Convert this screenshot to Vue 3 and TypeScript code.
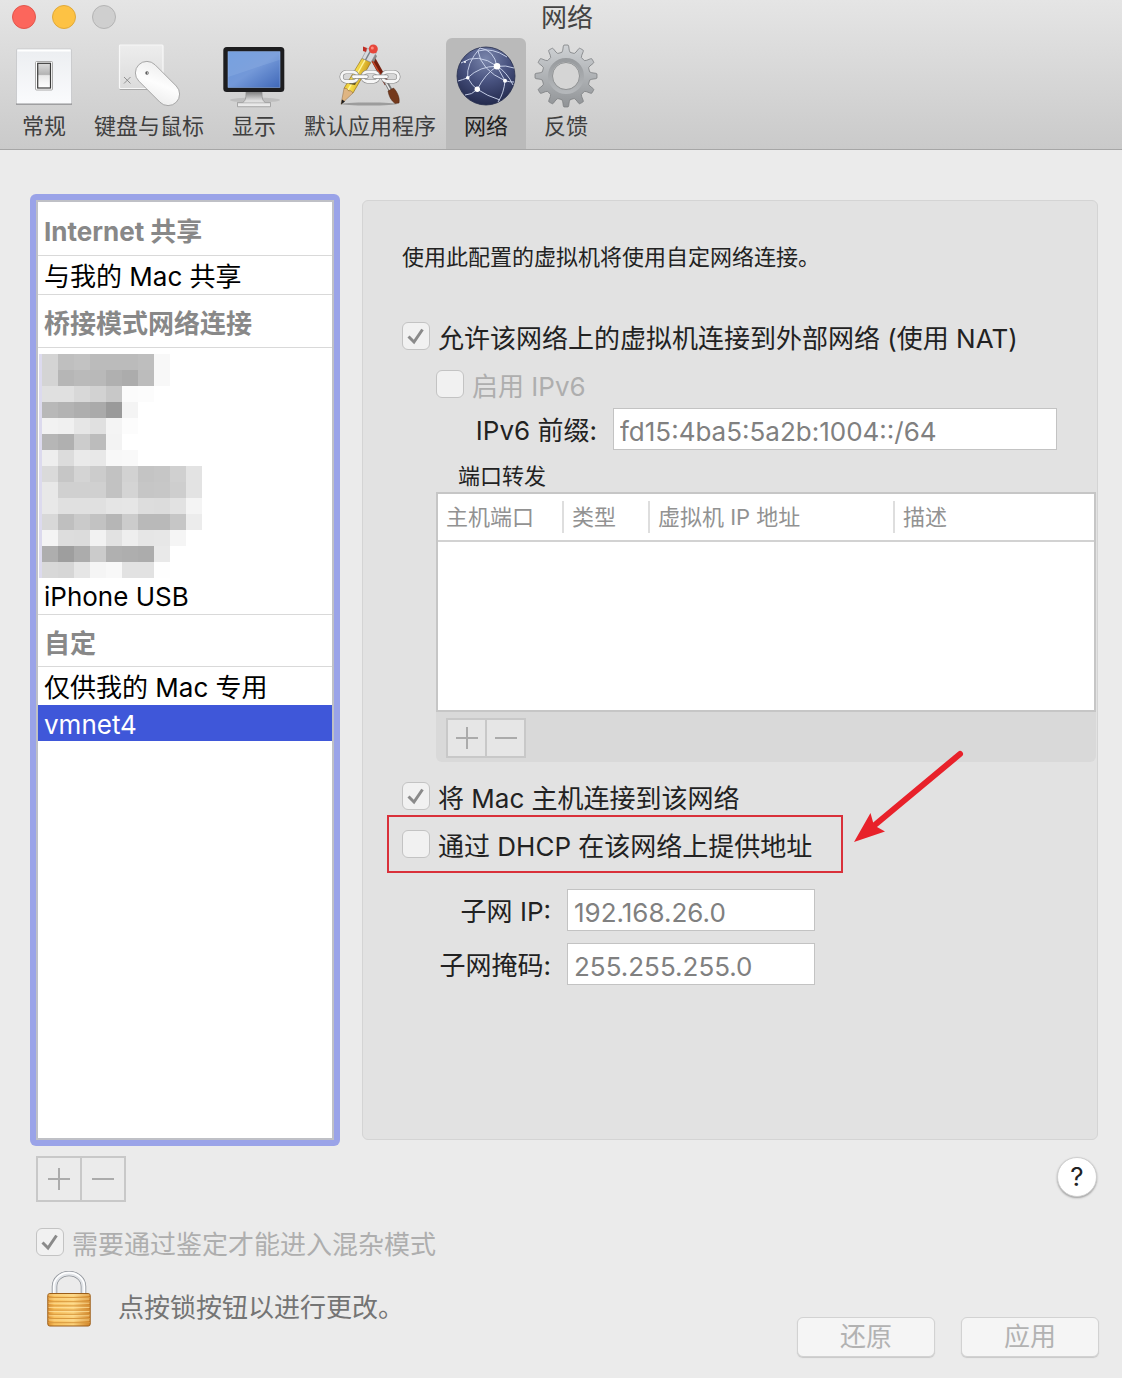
<script setup lang="ts">
import { ref } from 'vue'

interface Tab {
  id: string
  label: string
}

const tabs: Tab[] = [
  { id: 'general', label: '常规' },
  { id: 'input', label: '键盘与鼠标' },
  { id: 'display', label: '显示' },
  { id: 'apps', label: '默认应用程序' },
  { id: 'network', label: '网络' },
  { id: 'feedback', label: '反馈' },
]
const activeTab = ref('network')

const selected = ref('vmnet4')
const columns: string[] = ['主机端口', '类型', '虚拟机 IP 地址', '描述']

const allowNat = ref(true)
const enableIpv6 = ref(false)
const connectHost = ref(true)
const provideDhcp = ref(false)
const requireAuth = ref(true)

const ipv6Prefix = ref('fd15:4ba5:5a2b:1004::/64')
const subnetIp = ref('192.168.26.0')
const subnetMask = ref('255.255.255.0')

// Grey levels of the redacted interface names, one row per 16px band
const mosaic: string[][] = [
  'd4 bf c2 bb bb bb be f8',
  'd4 b6 ba b9 b0 ac bc f8',
  'e0 e0 d8 d2 c8 fb fc',
  'b8 b3 ae aa 9a f4',
  'f2 f0 e6 e0 f4 fc',
  'b6 b0 cc bc f3',
  'ee dc ea e8 f8 f9',
  'da c6 d4 cc c2 d2 c4 c6 d0 e3',
  'e8 d0 d0 d0 c2 d4 c6 c7 ce e3',
  'e8 e0 e0 e0 e5 e6 dd dc e2 f4',
  'd8 bf ca c2 b6 cc b9 b9 c6 ec',
  'f4 dd dc f2 e2 ee e6 e7 f5',
  'ae 9e ac cb b0 ae ac e9',
  'd8 d6 e6 f5 f8 e2 e2 fe',
].map((row) => row.split(' '))

function gearPath(cx: number, cy: number, teeth: number): string {
  const step = (Math.PI * 2) / teeth
  const at = (r: number, a: number) => `${(cx + r * Math.sin(a)).toFixed(2)} ${(cy - r * Math.cos(a)).toFixed(2)}`
  let d = ''
  for (let i = 0; i < teeth; i++) {
    const a = i * step
    d += `${i ? 'L' : 'M'}${at(24, a - step * 0.33)}L${at(26, a - step * 0.24)}L${at(30, a - step * 0.17)}`
    d += `Q${at(31.5, a - step * 0.14)} ${at(31, a - step * 0.06)}L${at(31, a + step * 0.06)}`
    d += `Q${at(31.5, a + step * 0.14)} ${at(30, a + step * 0.17)}L${at(26, a + step * 0.24)}L${at(24, a + step * 0.33)}`
  }
  return d + 'Z'
}
const gear = gearPath(32, 32, 12)
</script>

<template>
  <div class="window">
    <header class="toolbar">
      <div class="titlebar">
        <div class="lights">
          <button class="light close" aria-label="关闭"></button>
          <button class="light minimize" aria-label="最小化"></button>
          <button class="light zoom" aria-label="缩放" disabled></button>
        </div>
        <h1>网络</h1>
      </div>
      <nav class="tabs">
        <button
          v-for="tab in tabs"
          :key="tab.id"
          class="tab"
          :class="{ active: tab.id === activeTab }"
          @click="activeTab = tab.id"
        >
          <svg v-if="tab.id === 'general'" class="icon" viewBox="0 0 64 64">
            <defs>
              <linearGradient id="plate" x1="0" y1="0" x2="0" y2="1">
                <stop offset="0" stop-color="#eceef1" /><stop offset="1" stop-color="#fafbfd" />
              </linearGradient>
              <linearGradient id="rocker" x1="0" y1="0" x2="0" y2="1">
                <stop offset="0" stop-color="#dcdcdc" /><stop offset=".45" stop-color="#b4b4b4" />
                <stop offset=".5" stop-color="#e9e9e9" /><stop offset="1" stop-color="#fff" />
              </linearGradient>
            </defs>
            <path d="M4 60h56" stroke="#8e8e90" stroke-width="1.5" />
            <rect x="4.5" y="5" width="55" height="54.5" rx="1" fill="url(#plate)" stroke="#c4c5c8" stroke-width=".8" />
            <rect x="5.5" y="5.5" width="53" height="2" fill="#fff" />
            <rect x="23.5" y="17.5" width="17" height="28.5" rx="1" fill="#fff" stroke="#a0a0a0" stroke-width=".9" />
            <rect x="25.7" y="19.3" width="12.8" height="24.7" fill="url(#rocker)" stroke="#3a3a3a" stroke-width="1.2" />
          </svg>

          <svg v-else-if="tab.id === 'input'" class="icon" viewBox="0 0 64 64">
            <defs>
              <linearGradient id="pad" x1="0" y1="0" x2="0" y2="1">
                <stop offset="0" stop-color="#ededed" /><stop offset="1" stop-color="#dcdcdc" />
              </linearGradient>
              <linearGradient id="mouse" x1="0" y1="0" x2="1" y2="1">
                <stop offset="0" stop-color="#ededed" /><stop offset=".5" stop-color="#fdfdfd" /><stop offset="1" stop-color="#ececec" />
              </linearGradient>
            </defs>
            <rect x="2.5" y="2" width="43.5" height="44" rx="1" fill="#a9a9a9" />
            <rect x="2.5" y="1" width="43.5" height="43.5" rx="1" fill="url(#pad)" stroke="#f8f8f8" stroke-width="1.2" />
            <path d="M7 33l6.5 6.500M13.500 33L7 39.500" stroke="#888" stroke-width=".9" />
            <rect x="14" y="28" width="53" height="23" rx="11.5" transform="rotate(45 40.5 39.5)" fill="url(#mouse)" stroke="#9a9a9a" stroke-width=".8" />
            <circle cx="30" cy="29" r="1.7" fill="#555" /><circle cx="30.5" cy="29" r=".7" fill="#eee" />
          </svg>

          <svg v-else-if="tab.id === 'display'" class="icon" viewBox="0 0 64 64">
            <defs>
              <linearGradient id="screen" x1="0" y1="0" x2="1" y2="1">
                <stop offset="0" stop-color="#6a98dc" /><stop offset=".5" stop-color="#7398d8" /><stop offset="1" stop-color="#4068b8" />
              </linearGradient>
              <linearGradient id="stand" x1="0" y1="0" x2="0" y2="1">
                <stop offset="0" stop-color="#777" /><stop offset=".6" stop-color="#ddd" /><stop offset="1" stop-color="#eee" />
              </linearGradient>
            </defs>
            <ellipse cx="33" cy="56" rx="25" ry="2.5" fill="#aaa" opacity=".5" />
            <path d="M24 47h16c0 6 0 9 3 11.500h5.500v4.200h-33v-4.200H21C24 56 24 53 24 47z" fill="url(#stand)" stroke="#8e8e8e" stroke-width=".7" />
            <path d="M15.500 58.800h33" stroke="#aaa" stroke-width=".7" />
            <rect x="1.3" y="3" width="61" height="45" rx="3.5" fill="#1d1d1f" />
            <rect x="6" y="7.7" width="52" height="35.8" fill="url(#screen)" stroke="#8db0e6" stroke-width=".6" />
            <path d="M6 7.700h52v8L6 33z" fill="#a9c6ef" opacity=".2" />
          </svg>

          <svg v-else-if="tab.id === 'apps'" class="icon" viewBox="0 0 64 64">
            <defs>
              <linearGradient id="pencil" x1="0" y1="0" x2="1" y2=".4">
                <stop offset="0" stop-color="#d7a514" /><stop offset=".5" stop-color="#f8df4c" /><stop offset="1" stop-color="#c08a10" />
              </linearGradient>
            </defs>
            <ellipse cx="31" cy="60" rx="28" ry="1.5" fill="#666" opacity=".5" />
            <path d="M35 15l14 25" stroke="#76200f" stroke-width="5" />
            <path d="M34.500 17l12 21" stroke="#c8482a" stroke-width="1.5" />
            <path d="M48 38l5 9" stroke="#777" stroke-width="4" /><path d="M47.500 38l5 9" stroke="#eee" stroke-width="1.5" />
            <path d="M50 47l5.500-3c4 4 6.500 10 5.500 15l-4 .5c-4-3-6-7-7-12.500z" fill="#74391c" stroke="#4d2410" stroke-width=".5" />
            <path d="M33 16l4-6 2 2-3 6z" fill="#888" />
            <path d="M24 14.300l9 4L15 49 6 44.300z" fill="url(#pencil)" stroke="#8a6508" stroke-width=".6" />
            <path d="M27 16L10 46" stroke="#fff39a" stroke-width="1.5" />
            <path d="M6 44.300l2.500 .2 2 2.300 2.500 0 2 2.200L3 60.300z" fill="#dfb582" stroke="#8c6b43" stroke-width=".5" />
            <path d="M4 55.500L3 60.600l4-3.200z" fill="#1d1d1d" />
            <path d="M24 14.300l5.500-10 9 4-5.500 10z" fill="#d7dade" stroke="#8c8f94" stroke-width=".6" />
            <path d="M27.500 16l5.500-10" stroke="#7c8086" stroke-width="1.5" />
            <circle cx="35.3" cy="5" r="4.5" fill="#e6473b" /><circle cx="34.3" cy="4" r="1.5" fill="#ff8a7c" />
            <path d="M25 2.500l4 1.500-1 4-3-1z" fill="#bf2d23" />
            <path d="M14 36l6-1-3 6-6-1z" fill="#2e2410" opacity=".75" />
            <g fill="none" stroke="#888" stroke-width="4">
              <rect x="3.5" y="28" width="16" height="9.5" rx="4.7" /><rect x="24.5" y="28" width="16" height="9.5" rx="4.7" /><rect x="44.5" y="28" width="16" height="9.5" rx="4.7" />
            </g>
            <g fill="none" stroke="#f6f6f6" stroke-width="2.8">
              <rect x="3.5" y="28" width="16" height="9.5" rx="4.7" /><rect x="24.5" y="28" width="16" height="9.5" rx="4.7" /><rect x="44.5" y="28" width="16" height="9.5" rx="4.7" />
            </g>
            <path d="M15.500 32.700h13M36.500 32.700h12" stroke="#888" stroke-width="4.2" stroke-linecap="round" />
            <path d="M15.500 32.700h13M36.500 32.700h12" stroke="#fafafa" stroke-width="2.8" stroke-linecap="round" />
          </svg>

          <svg v-else-if="tab.id === 'network'" class="icon" viewBox="0 0 64 64">
            <defs>
              <radialGradient id="globe" cx=".5" cy=".2" r=".8">
                <stop offset="0" stop-color="#7985ab" /><stop offset=".5" stop-color="#48527f" /><stop offset="1" stop-color="#232a4d" />
              </radialGradient>
            </defs>
            <circle cx="32" cy="32" r="29" fill="url(#globe)" stroke="#262d4c" stroke-width=".8" />
            <g fill="none" stroke="#d3dcf3" stroke-width="1" opacity=".9">
              <path d="M7 19Q24 8 43 22.300Q53 28 59 41" />
              <path d="M26 4Q40 6 43 22.300L51 36.700" />
              <path d="M43 22.300Q52 21 60 24" />
              <path d="M43 22.300Q31 30 23.300 45.300Q18 51 11 51" />
              <path d="M13.700 33.700Q12 20 26 4" />
              <path d="M13.700 33.700Q26 22 43 22.300" />
              <path d="M13.700 33.700Q18 42 23.300 45.300Q33 52 46 56" />
              <path d="M24 7Q27 26 51 36.700Q55 38 60 38" />
              <path d="M51 36.700Q50 49 44 58" />
              <path d="M24 7Q38 3 53 13" />
              <path d="M4 37Q8 36 13.700 33.700" />
            </g>
            <g fill="#fff">
              <circle cx="43" cy="22.3" r="3.3" /><circle cx="13.7" cy="33.7" r="1.8" />
              <circle cx="23.3" cy="45.3" r="2.7" /><circle cx="51" cy="36.7" r="2" /><circle cx="11" cy="18" r="1" />
            </g>
          </svg>

          <svg v-else class="icon" viewBox="0 0 64 64">
            <defs>
              <linearGradient id="gear" x1="0" y1="0" x2="0" y2="1">
                <stop offset="0" stop-color="#cfd2d5" /><stop offset="1" stop-color="#909396" />
              </linearGradient>
              <linearGradient id="ring" x1="0" y1="0" x2="0" y2="1">
                <stop offset="0" stop-color="#989b9e" /><stop offset="1" stop-color="#b4b7ba" />
              </linearGradient>
            </defs>
            <path :d="gear" fill="url(#gear)" stroke="#7c7f82" stroke-width=".8" />
            <circle cx="32" cy="32" r="16" fill="none" stroke="url(#ring)" stroke-width="4" />
            <circle cx="32" cy="32" r="13.5" fill="#d5d5d5" stroke="#838587" stroke-width=".8" />
          </svg>
          <span>{{ tab.label }}</span>
        </button>
      </nav>
    </header>

    <main class="content">
      <aside class="sidebar">
        <div class="list">
          <h2>Internet 共享</h2>
          <button class="row ruled" @click="selected = 'share'">与我的 Mac 共享</button>
          <h2>桥接模式网络连接</h2>
          <svg class="mosaic" viewBox="0 0 163 224" shape-rendering="crispEdges" aria-hidden="true">
            <rect width="3" height="224" fill="#dcdaee" />
            <template v-for="(cells, r) in mosaic" :key="r">
              <rect
                v-for="(tone, c) in cells"
                :key="c"
                :x="3 + c * 16"
                :y="r * 16"
                width="16"
                height="16"
                :fill="`#${tone}${tone}${tone}`"
              />
            </template>
          </svg>
          <button class="row" @click="selected = 'iphone'">iPhone USB</button>
          <h2 class="over">自定</h2>
          <button class="row" @click="selected = 'private'">仅供我的 Mac 专用</button>
          <button class="row" :class="{ selected: selected === 'vmnet4' }" @click="selected = 'vmnet4'">vmnet4</button>
        </div>
      </aside>

      <section class="panel">
        <p class="intro">使用此配置的虚拟机将使用自定网络连接。</p>

        <label class="check">
          <span class="box"><input v-model="allowNat" type="checkbox" /><svg viewBox="0 0 28 28"><path d="M6.500 14.500L12 20 20.500 7.500" /></svg></span>
          <span class="text">允许该网络上的虚拟机连接到外部网络 (使用 NAT)</span>
        </label>
        <label class="check nested muted">
          <span class="box"><input v-model="enableIpv6" type="checkbox" disabled /><svg viewBox="0 0 28 28"><path d="M6.500 14.500L12 20 20.500 7.500" /></svg></span>
          <span class="text">启用 IPv6</span>
        </label>
        <div class="field prefix">
          <label for="ipv6-prefix">IPv6 前缀:</label>
          <input id="ipv6-prefix" v-model="ipv6Prefix" type="text" />
        </div>

        <h3>端口转发</h3>
        <div class="forwarding">
          <div class="table-frame">
            <table>
              <thead>
                <tr>
                  <th v-for="column in columns" :key="column" scope="col"><span>{{ column }}</span></th>
                </tr>
              </thead>
            </table>
          </div>
          <div class="table-footer">
            <div class="stepper small">
              <button aria-label="添加端口转发" disabled><svg viewBox="0 0 22 22"><path d="M0 11h22M11 0v22" /></svg></button>
              <button aria-label="移除端口转发" disabled><svg viewBox="0 0 22 22"><path d="M0 11h22" /></svg></button>
            </div>
          </div>
        </div>

        <label class="check">
          <span class="box"><input v-model="connectHost" type="checkbox" /><svg viewBox="0 0 28 28"><path d="M6.500 14.500L12 20 20.500 7.500" /></svg></span>
          <span class="text">将 Mac 主机连接到该网络</span>
        </label>
        <div class="marked">
          <label class="check">
            <span class="box"><input v-model="provideDhcp" type="checkbox" /><svg viewBox="0 0 28 28"><path d="M6.500 14.500L12 20 20.500 7.500" /></svg></span>
            <span class="text">通过 DHCP 在该网络上提供地址</span>
          </label>
          <svg class="arrow" viewBox="0 0 112 96" aria-hidden="true">
            <path d="M108 6L24 76" stroke="#e8212a" stroke-width="6" stroke-linecap="round" />
            <path d="M2 94L18.500 65 21 74 25 79 33 83.500z" fill="#e8212a" />
          </svg>
        </div>

        <div class="subnet">
          <div class="field">
            <label for="subnet-ip">子网 IP:</label>
            <input id="subnet-ip" v-model="subnetIp" type="text" />
          </div>
          <div class="field">
            <label for="subnet-mask">子网掩码:</label>
            <input id="subnet-mask" v-model="subnetMask" type="text" />
          </div>
        </div>
      </section>
    </main>

    <footer class="bottom">
      <div class="bottom-row">
        <div class="stepper">
          <button aria-label="添加网络" disabled><svg viewBox="0 0 22 22"><path d="M0 11h22M11 0v22" /></svg></button>
          <button aria-label="移除网络" disabled><svg viewBox="0 0 22 22"><path d="M0 11h22" /></svg></button>
        </div>
        <button class="help">?</button>
      </div>
      <label class="check muted">
        <span class="box"><input v-model="requireAuth" type="checkbox" disabled /><svg viewBox="0 0 28 28"><path d="M6.500 14.500L12 20 20.500 7.500" /></svg></span>
        <span class="text">需要通过鉴定才能进入混杂模式</span>
      </label>
      <div class="actions">
        <button class="lock">
          <svg viewBox="0 0 44 56" aria-hidden="true">
            <defs>
              <linearGradient id="brass" x1="0" y1="0" x2="1" y2="0">
                <stop offset="0" stop-color="#d98a2b" /><stop offset=".15" stop-color="#f7bf5c" />
                <stop offset=".6" stop-color="#fbd27c" /><stop offset="1" stop-color="#d18327" />
              </linearGradient>
            </defs>
            <path d="M7.500 24V15.500a14.500 13 0 0 1 29 0V24" fill="none" stroke="#8b8f95" stroke-width="5.5" />
            <path d="M7.500 24V15.500a14.500 13 0 0 1 29 0V24" fill="none" stroke="#e2e5e9" stroke-width="4" />
            <path d="M6.800 24V15.500a15.200 13.700 0 0 1 30.400 0V24" fill="none" stroke="#fff" stroke-width="1.5" />
            <rect x=".8" y="22.5" width="42.4" height="32.5" rx="2" fill="url(#brass)" stroke="#9b5d18" stroke-width="1" />
            <path d="M1 26.500h42M1 30.700h42M1 34.900h42M1 39.100h42M1 43.300h42M1 47.500h42M1 51.700h42" stroke="#d8983e" stroke-width="1" />
            <path d="M1.500 24h41M1.500 28h41M1.500 32.200h41M1.500 36.400h41M1.500 40.600h41M1.500 44.800h41M1.500 49h41" stroke="#ffe3a0" stroke-width=".8" />
          </svg>
          <span>点按锁按钮以进行更改。</span>
        </button>
        <div class="buttons">
          <button class="push" disabled>还原</button>
          <button class="push" disabled>应用</button>
        </div>
      </div>
    </footer>
  </div>
</template>

<style>
body {
  margin: 0;
  background: #ebebeb;
}
</style>

<style scoped>
.window {
  display: flex;
  flex-direction: column;
  min-height: 100vh;
  background: #ebebeb;
  color: #222;
  font-family: Inter, 'Noto Sans CJK SC', sans-serif;
  font-size: 26px;
  line-height: 32px;
}
.window *,
.window *::before,
.window *::after {
  box-sizing: border-box;
}
button,
input {
  margin: 0;
  padding: 0;
  border: 0;
  background: none;
  color: inherit;
  font: inherit;
}
h1,
h2,
h3,
p {
  margin: 0;
  font-weight: 400;
}
svg {
  display: block;
}

/* Title bar and tabs */
.toolbar {
  height: 150px;
  border-bottom: 1px solid #a6a6a6;
  background: linear-gradient(#e5e5e5, #cacaca);
}
.titlebar {
  display: grid;
  grid-template-columns: 1fr auto 1fr;
  align-items: center;
  height: 38px;
  padding: 0 0 6px 12px;
}
.lights {
  display: flex;
  gap: 16px;
}
.light {
  width: 24px;
  height: 24px;
  border: 1px solid;
  border-radius: 50%;
}
.close {
  border-color: #e2564c;
  background: #fc665c;
}
.minimize {
  border-color: #e0a93a;
  background: #fdc244;
}
.zoom {
  border-color: #b4b4b4;
  background: #cfcfcf;
}
h1 {
  padding-top: 2px;
  color: #444;
  font-size: 26px;
}
.tabs {
  display: flex;
  height: 111px;
  padding-left: 4px;
}
.tab {
  display: flex;
  flex-direction: column;
  align-items: center;
  min-width: 80px;
  padding: 6px 10px 0;
  border-radius: 6px 6px 0 0;
  color: #3f3f3f;
  font-size: 22px;
  line-height: 36px;
}
.tab.active {
  background: #bababa;
  color: #222;
}
.icon {
  width: 64px;
  height: 64px;
  margin: 0 -2px;
  overflow: visible;
}

/* Body */
.content {
  display: flex;
  flex: 1;
  gap: 22px;
  padding: 44px 24px 0 30px;
}
.sidebar {
  flex: none;
  width: 310px;
  padding: 6px;
  border-radius: 6px;
  background: #9aa3e8;
}
.list {
  height: 100%;
  padding-top: 1px;
  border: 2px solid #bfc0c6;
  background: #fff;
}
h2 {
  height: 53px;
  padding: 13px 6px 0;
  border-bottom: 1px solid #d9d9d9;
  color: #888;
  font-size: 26px;
  font-weight: 700;
}
.row {
  display: block;
  width: 100%;
  height: 38px;
  padding: 4px 6px 0;
  color: #000;
  text-align: left;
}
.ruled {
  height: 39px;
  border-bottom: 1px solid #d9d9d9;
}
.over {
  border-top: 1px solid #d9d9d9;
}
.selected {
  height: 36px;
  background: #3f57d9;
  color: #fff;
}
.mosaic {
  width: 163px;
  height: 224px;
  margin: 6px 0 -2px 1px;
}

.panel {
  flex: 1;
  min-width: 0;
  margin: 6px 0;
  padding: 40px 1px 0 39px;
  border: 1px solid #d4d4d4;
  border-radius: 6px;
  background: #e2e2e2;
}
.intro {
  margin-bottom: 39px;
  font-size: 22px;
}
.check {
  display: flex;
  align-items: center;
  gap: 8px;
  height: 48px;
}
.nested {
  margin-left: 34px;
}
.muted {
  color: #aeaeae;
}
.text {
  padding-top: 5px;
}
.box {
  display: grid;
  flex: none;
}
.box input,
.box svg {
  grid-area: 1 / 1;
  width: 28px;
  height: 28px;
}
.box input {
  appearance: none;
  border: 1px solid #c3c3c3;
  border-radius: 6px;
  background: #f1f1f1;
}
.box svg {
  visibility: hidden;
  fill: none;
  stroke: #8a8a8a;
  stroke-width: 3;
  pointer-events: none;
}
.box input:checked + svg {
  visibility: visible;
}
.field {
  display: flex;
  gap: 16px;
}
.field label {
  width: 149px;
  padding-top: 4px;
  line-height: 38px;
  text-align: right;
}
.field input {
  width: 248px;
  height: 42px;
  padding: 4px 6px 0;
  border: 1px solid #c3c3c3;
  background: #fff;
  color: #808080;
}
.prefix label {
  width: 195px;
}
.prefix input {
  flex: 1;
  margin-right: 39px;
}
h3 {
  margin-left: 56px;
  padding-top: 10px;
  font-size: 22px;
}
.forwarding {
  margin: 0 0 10px 34px;
}
.table-frame {
  height: 220px;
  border: 2px solid #c6c6c6;
  background: #fff;
}
table {
  width: 100%;
  border-spacing: 0;
  table-layout: fixed;
}
th {
  height: 48px;
  padding: 0;
  border-bottom: 2px solid #d2d2d2;
  color: #929292;
  font-size: 22px;
  font-weight: 400;
  text-align: left;
}
th span {
  display: block;
  padding-left: 8px;
  border-right: 2px solid #dedede;
}
th:last-child span {
  border-right: 0;
}
th:nth-child(1) {
  width: 126px;
}
th:nth-child(2) {
  width: 86px;
}
th:nth-child(3) {
  width: 245px;
}
.table-footer {
  height: 50px;
  padding: 6px 10px;
  border-radius: 0 0 6px 6px;
  background: #d9d9d9;
}
.stepper {
  display: flex;
}
.stepper button {
  display: grid;
  place-items: center;
  width: 46px;
  height: 46px;
  border: 2px solid #c8c8c8;
  background: #ebebeb;
}
.stepper button + button {
  margin-left: -2px;
}
.stepper svg {
  width: 22px;
  height: 22px;
  fill: none;
  stroke: #ababab;
  stroke-width: 2;
}
.small button {
  width: 41px;
  height: 40px;
  background: #e6e6e6;
}

/* Highlight frame and pointer over the DHCP option */
.marked {
  position: relative;
  width: 430px;
}
.marked::after {
  position: absolute;
  inset: -5px -11px -5px -15px;
  border: 2px solid #d9303a;
  content: '';
  pointer-events: none;
}
.arrow {
  position: absolute;
  top: -72px;
  left: 450px;
  width: 112px;
  height: 96px;
  fill: none;
}
.subnet {
  display: grid;
  gap: 12px;
  margin-top: 21px;
}

/* Bottom area */
.bottom {
  padding: 10px 23px 21px 36px;
}
.bottom-row {
  display: flex;
  justify-content: space-between;
  margin-bottom: 16px;
}
.help {
  width: 40px;
  height: 40px;
  margin: 1px 2px 0 0;
  border: 1px solid #cfcfcf;
  border-radius: 50%;
  background: #fff;
  box-shadow: 0 1px 2px #9d9d9d;
}
.actions {
  display: flex;
  align-items: flex-end;
  justify-content: space-between;
  margin-top: 5px;
}
.lock {
  display: flex;
  align-items: flex-end;
  gap: 27px;
  padding: 0 0 30px 11px;
  color: #747474;
}
.lock svg {
  width: 44px;
  height: 56px;
}
.lock span {
  padding-bottom: 3px;
}
.buttons {
  display: flex;
  gap: 26px;
}
.push {
  width: 138px;
  height: 40px;
  border: 1px solid #d2d2d2;
  border-radius: 6px;
  background: #f5f5f5;
  box-shadow: 0 1px 1px #c8c8c8;
  color: #b2b2b2;
}
</style>
